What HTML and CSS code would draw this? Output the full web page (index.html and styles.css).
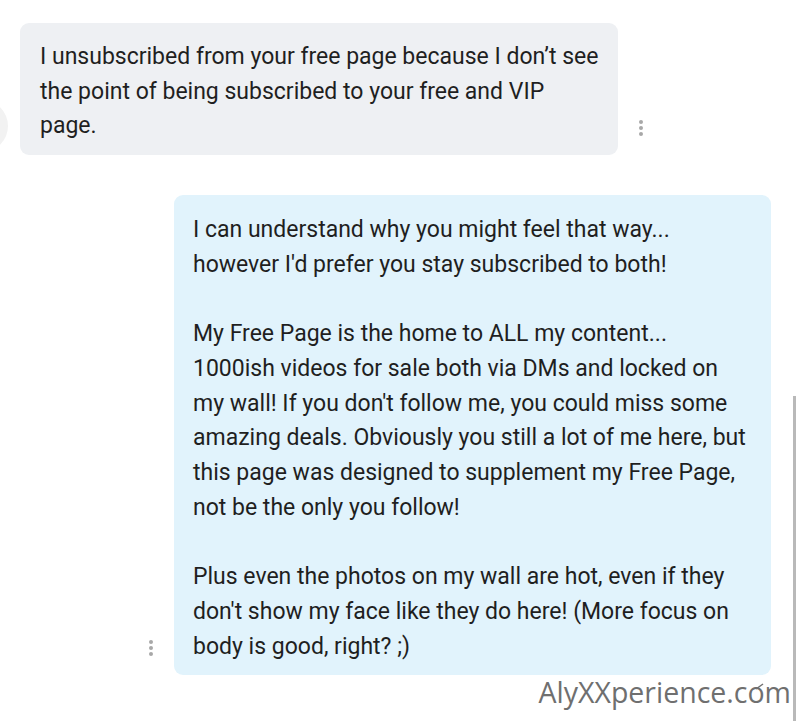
FILE: index.html
```html
<!DOCTYPE html>
<html>
<head>
<meta charset="utf-8">
<link rel="stylesheet" href="styles.css">
</head>
<body>
<div class="chat">
  <div class="row row-in">
    <div class="avatar"></div>
    <div class="bubble bubble-in">I unsubscribed from your free page because I don’t see<br>the point of being subscribed to your free and VIP<br>page.</div>
    <div class="dots"><span></span><span></span><span></span></div>
  </div>
  <div class="row row-out">
    <div class="dots"><span></span><span></span><span></span></div>
    <div class="bubble bubble-out">I can understand why you might feel that way...<br>however I'd prefer you stay subscribed to both!<br><br>My Free Page is the home to ALL my content...<br>1000ish videos for sale both via DMs and locked on<br>my wall! If you don't follow me, you could miss some<br>amazing deals. Obviously you still a lot of me here, but<br>this page was designed to supplement my Free Page,<br>not be the only you follow!<br><br>Plus even the photos on my wall are hot, even if they<br>don't show my face like they do here! (More focus on<br>body is good, right? ;)</div>
  </div>
  <div class="watermark">AlyXXperience.com<svg class="tick" width="9" height="7" viewBox="0 0 9 7"><path d="M1 6 L8 1" stroke="#707070" stroke-width="1.5" fill="none"/></svg></div>
  <div class="scrollbar"></div>
</div>
</body>
</html>
```
FILE: styles.css
```css
html, body {
  margin: 0;
  padding: 0;
  background: #ffffff;
}
.chat {
  position: relative;
  width: 800px;
  height: 721px;
  overflow: hidden;
  font-family: Roboto, "Liberation Sans", sans-serif;
  color: #1f1f1f;
}
.row {
  display: flex;
  align-items: flex-end;
}
.row-in {
  padding-top: 23px;
}
.avatar {
  position: absolute;
  left: -44px;
  top: 100px;
  width: 52px;
  height: 52px;
  border-radius: 50%;
  background: #f2f2f2;
}
.bubble {
  font-size: 23px;
  line-height: 34.7px;
  border-radius: 9px;
  white-space: nowrap;
}
.bubble-in {
  margin-left: 20px;
  width: 558px;
  padding: 17px 20px 11px 20px;
  background: #eef0f3;
}
.row-in .dots {
  margin-left: 21px;
  margin-bottom: 19px;
}
.row-out {
  margin-top: 40px;
  justify-content: flex-end;
  padding-right: 29px;
}
.row-out .dots {
  margin-right: 21px;
  margin-bottom: 19px;
}
.bubble-out {
  width: 559px;
  padding: 18px 19px 11px 19px;
  background: #e1f3fc;
}
.dots {
  display: flex;
  flex-direction: column;
  gap: 2px;
}
.dots span {
  width: 4px;
  height: 4px;
  border-radius: 50%;
  background: #a8a8a8;
}
.watermark {
  position: absolute;
  right: 9px;
  top: 673px;
  font-family: "Open Sans", "DejaVu Sans", sans-serif;
  font-size: 28.5px;
  color: #6f6f6f;
}
.tick {
  position: absolute;
  right: 27px;
  top: 10px;
}
.scrollbar {
  position: absolute;
  left: 793px;
  top: 396px;
  width: 3px;
  height: 325px;
  background: #b9b9b9;
}
```
